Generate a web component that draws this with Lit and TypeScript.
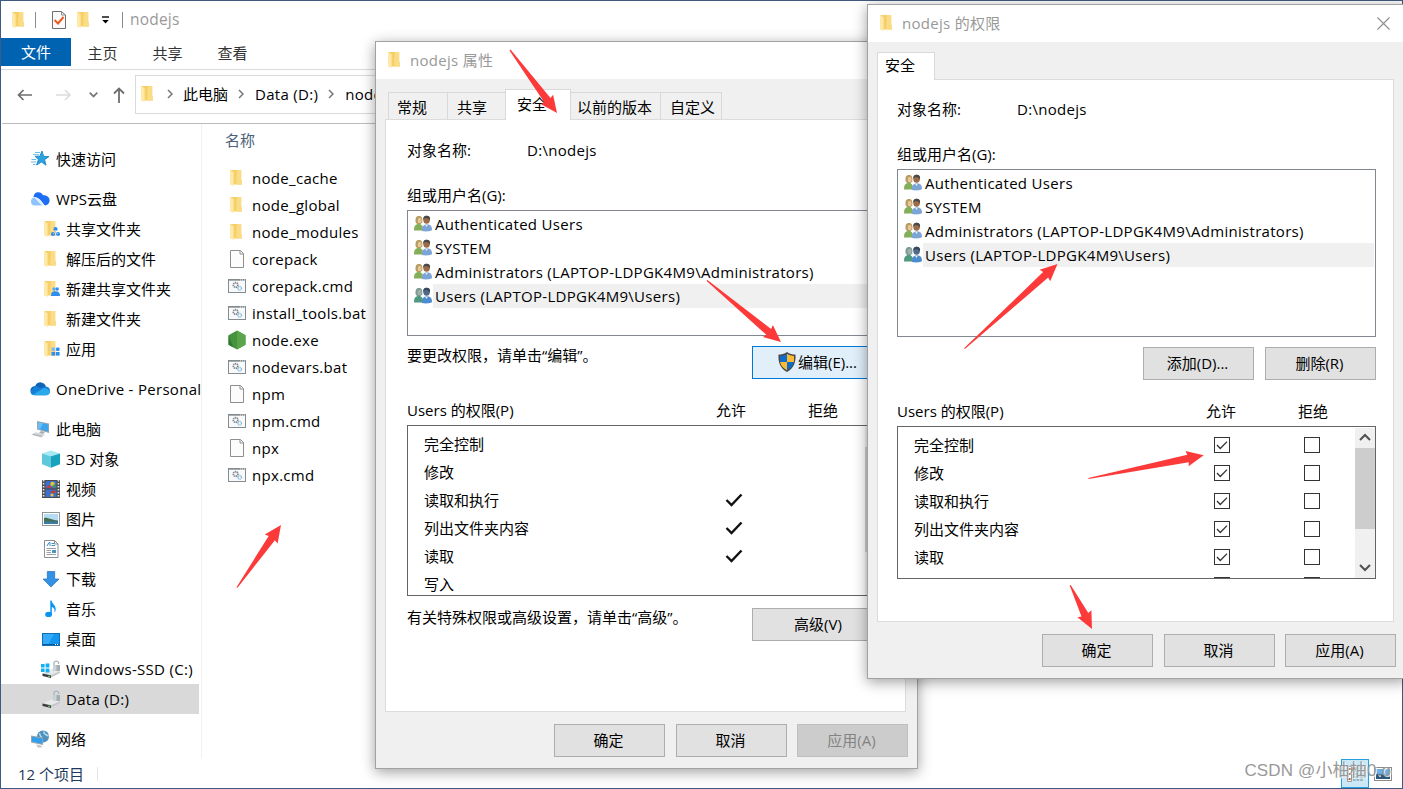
import { LitElement, html, css, svg } from 'lit';
import { customElement } from 'lit/decorators.js';
import { classMap } from 'lit/directives/class-map.js';

/* ---------- Icons (18x18 unless noted) ---------- */

const icon = (body: unknown) => html`<svg class="icon" width="18" height="18" viewBox="0 0 18 18">${body}</svg>`;

const folderShape = svg`
  <path d="M2.5 1H13.2V11.5H14V15.5H2.5Z" fill="#f6cf68"/>
  <path d="M9 1H13.2V11.5H14V15.5H8Z" fill="#f9dc85"/>
  <path d="M2 1L5.6 3.2V17L2 15.2Z" fill="#ffe9a8"/>`;

const diskShape = svg`
  <path d="M1 13.5L10 9.5L18 11.5V13L9 17.5L1 15.5Z" fill="#c3c7ca"/>
  <path d="M1 13.2L10 9.2L18 11.2L9.5 15Z" fill="#e6e8ea"/>
  <path d="M0.5 13.6L9 15.4V18L0.5 16Z" fill="#3a3d3f"/>
  <path d="M6 16.3H8" stroke="#57d957"/>
  <path d="M12 5V2.8A2.4 2.4 0 0 1 16.6 2.8V4" fill="none" stroke="#a8b4bb" stroke-width="1.3"/>
  <rect x="11.5" y="5" width="6.5" height="6" fill="#a3adb3"/>
  <rect x="11.5" y="5" width="3" height="6" fill="#c9d3d8"/>`;

const people = (selected = false) => {
  const [hair, skin, green, dark, face, blue] = selected
    ? ['#7f9a94', '#9fb3ac', '#4f9a7f', '#38485c', '#4f6a86', '#4c8ccf']
    : ['#b89b5e', '#e6c79c', '#85ae5a', '#4a4745', '#9a6d48', '#7ba5d6'];
  return icon(svg`
    <path d="M1.5 7C1.2 2.5 2.5 1 5 1S8.8 2.6 8.3 7.5L6.5 9H3Z" fill="${hair}"/>
    <ellipse cx="5.6" cy="5.4" rx="2" ry="2.7" fill="${skin}"/>
    <path d="M0 15.5C0 11 1 9.4 5 8.8C8 9.4 9 11 9 15.5Z" fill="${green}"/>
    <ellipse cx="12.6" cy="4.8" rx="3.3" ry="4" fill="${face}"/>
    <path d="M9.2 5C9 1.8 10.6 0.6 13 0.8C16 1 16.6 3.4 15.8 5.6C15 3.4 13 3.4 11 3Z" fill="${dark}"/>
    <path d="M7.8 16C7.8 11.5 9 10 12.5 9C16.5 9.6 18 11 18 15.2C15 16.6 11 16.6 7.8 16Z" fill="${blue}"/>
    <path d="M11 9.4L12.4 12L14 9.4Z" fill="#e9eef5"/>`);
};

const icons: Record<string, unknown> = {
  folder: icon(folderShape),
  star: icon(svg`
    <path d="M11 1L12.6 6.3L18 6.6L13.6 9.7L15 15.2L10.5 12L5.6 15L7.4 9.6L4 6.3L8.8 6.2Z" fill="#2aa3e0" stroke="#1580bd" stroke-width=".8"/>
    <path d="M4 2.5H9M2 4.7H8M0.5 9.5H5M0 12H5M2 14.5H4.5" stroke="#66bdec"/>`),
  wps: icon(svg`
    <path d="M0 11.5A4 4 0 0 1 3.5 7.6L11 15.5H4A4 4 0 0 1 0 11.5Z" fill="#8dc4ff"/>
    <path d="M2.5 7C3 3.5 5 2.3 7.3 2.3S11 3.4 12 5.3C15.8 5 18.8 7.4 18.6 10.6C18.4 14 16 15.5 14 15.5C11 12.5 9 7 2.5 7Z" fill="#1f6df2"/>
    <path d="M3.5 7.6C8 7 10 11 13 15.5H11C9 14 8 9.5 3.5 7.6Z" fill="#d9ebff"/>`),
  folderShare: icon(svg`${folderShape}
    <circle cx="13.5" cy="9" r="2.1" fill="#2e8df0"/><circle cx="11" cy="14" r="2.1" fill="#2e8df0"/><circle cx="16" cy="14" r="2.1" fill="#2e8df0"/>
    <path d="M13.5 10V12L11 14M13.5 12L16 14" fill="none" stroke="#9fc9f7"/>`),
  folderPeople: icon(svg`${folderShape}
    <circle cx="12" cy="9" r="1.7" fill="#5ba8f5"/><circle cx="15.2" cy="9" r="1.7" fill="#2e8df0"/>
    <path d="M9 16C9 12.5 10.5 11.3 13.3 11.3S18 12.5 18 16Z" fill="#2e8df0"/>`),
  folderApps: icon(svg`${folderShape}
    <rect x="9.5" y="7.5" width="3.6" height="3.6" fill="#7cbcf7"/><rect x="14" y="7.5" width="3.6" height="3.6" rx="1" fill="#2e8df0"/>
    <rect x="9.5" y="12" width="3.6" height="3.6" fill="#2e8df0"/><rect x="14" y="12" width="3.6" height="3.6" fill="#2e8df0"/>`),
  onedrive: html`<svg class="icon" width="20" height="18" viewBox="1 2 18 14">
    <path d="M0.5 11.2C0.3 8 2.5 6.2 5 6.3C6.6 3 9 2.2 11 2.4C14 2.7 15.4 4.5 16 6.6L8 12Z" fill="#0f64b8"/>
    <path d="M5 6.3C7 6 8.5 7 10 8L16 6.6C18.5 6.8 20 8.5 20 11C19.8 14 18 15.2 16 15.2H4.5C2 15.2 0.4 13.6 0.5 11.2Z" fill="#1580d8"/>
    <path d="M3 14.8L13 8.4C14.5 7.6 17 8 20 11.5C19.6 14 18 15.2 16 15.2H4.5Z" fill="#2aa8ea"/>
  </svg>`,
  pc: icon(svg`
    <path d="M6 1L18 3.5V13L6 9.5Z" fill="#9aa5ad"/>
    <path d="M7 2.2L17.2 4.4V11.6L7 8.8Z" fill="#3aa4ef"/>
    <path d="M7 2.2L12 3.3L9 9.4L7 8.8Z" fill="#68bff7"/>
    <path d="M10 11L14 12L12 14L8 13Z" fill="#a6adb2"/>
    <path d="M0 14.4L5 12.2L14 14.8L10 17.4Z" fill="#cfd4d8"/>
    <path d="M2 14.5L11 16.4" stroke="#9aa2a8" stroke-width=".7"/>`),
  cube: icon(svg`
    <path d="M9 0.5L18 3.5L9 6.2L0 3.5Z" fill="#a6e9f3"/>
    <path d="M0 3.5L9 6.2V17.8L0 14.2Z" fill="#5fc9dc"/>
    <path d="M18 3.5L9 6.2V17.8L18 14.2Z" fill="#18a3bd"/>`),
  video: icon(svg`
    <rect width="18" height="18" fill="#4c4c4c"/>
    <path d="M1.6 0V18M16.4 0V18" stroke="#e8e8e8" stroke-width="1.6" stroke-dasharray="1.6 1.4"/>
    <rect x="3.5" y="1" width="11" height="7.3" fill="#3d6fd0"/><rect x="3.5" y="9.6" width="11" height="7.4" fill="#3d6fd0"/>
    <circle cx="10.5" cy="4" r="2.2" fill="#e8c42f"/><circle cx="12" cy="6" r="1.6" fill="#4a9b3c"/>
    <path d="M4 7.8L7 5L10 8ZM8 12L12 10L14 12L11 13.5Z" fill="#d2392e"/><circle cx="10" cy="15" r="1.6" fill="#e8c42f"/>`),
  picture: icon(svg`
    <rect x="0.5" y="2.5" width="17" height="13" fill="#fff" stroke="#8f979c"/>
    <rect x="2" y="4" width="14" height="10" fill="#b5dcf5"/>
    <path d="M2 8C5 7 8 9.5 16 10.5V12H2Z" fill="#446e50"/><path d="M2 11.5H16V14H2Z" fill="#3c7aa8"/>`),
  doc: icon(svg`
    <path d="M2.5 0.5H12.5L16 4V17.5H2.5Z" fill="#fff" stroke="#8b8f92"/>
    <path d="M12.5 0.5V4H16" fill="none" stroke="#8b8f92"/>
    <path d="M5 6L7 2.5H8V6M9.5 3.5H12M9.5 5.5H13" fill="none" stroke="#3b8ec2"/>
    <path d="M4.5 8.5H14M4.5 10.5H9M4.5 12.5H9M4.5 14.5H14" stroke="#9a9fa3"/>
    <rect x="10" y="10" width="4" height="3" fill="#4b93bd"/>`),
  download: icon(svg`<path d="M5.3 1.5H12.7V9H17L9 17L1 9H5.3Z" fill="#3492e6" stroke="#2273bd" stroke-width=".7"/>`),
  music: icon(svg`
    <path d="M8.3 0.5H9.6C10 4 14 5 13.7 9.5C13.6 11 13 12 12.4 12.5C13.2 9 11.5 7.5 9.8 7V14H8.3Z" fill="#0b93f0"/>
    <ellipse cx="6.6" cy="14.4" rx="3.4" ry="2.7" fill="#0b93f0"/>`),
  desktop: icon(svg`
    <rect x="0.5" y="3.5" width="17" height="12" fill="#1296f0" stroke="#0c6fb8"/>
    <path d="M1 4H12L6 15H1Z" fill="#35aaf8"/><path d="M1 14.5H17" stroke="#0b5a97"/><path d="M13 14.5H16" stroke="#fff" stroke-dasharray="1 1"/>`),
  driveC: icon(svg`${diskShape}
    <path d="M-1 4H2.6V7.6H-1ZM3.6 3.4H7.4V7.6H3.6ZM-1 8.6H2.6V12H-1ZM3.6 8.6H7.4V12.6H3.6Z" fill="#12b0f2"/>`),
  drive: icon(diskShape),
  network: icon(svg`
    <circle cx="12" cy="6.6" r="6" fill="#4f90bf"/><path d="M8.2 3.4C10 5 8 6 11 7.4M13 1.4C12 4 15 4.6 17.6 6" fill="none" stroke="#b4dcec" stroke-width="1.5"/>
    <path d="M0 5.5L12 7.6V15L0 12.5Z" fill="#98a4ad"/><path d="M1 6.7L11.2 8.5V13.8L1 11.6Z" fill="#2f9ff0"/>
    <path d="M5 14.5L9 15.3L12 17L7 17.8Z" fill="#c1c6ca"/>`),
  file: icon(svg`
    <path d="M2.5 0.5H12.5L15.5 3.5V17.5H2.5Z" fill="#fcfcfc" stroke="#8e8e8e"/>
    <path d="M12 0.5V4H15.5" fill="none" stroke="#8e8e8e"/>`),
  script: icon(svg`
    <rect x="0.5" y="2.5" width="17" height="13" fill="#f7f9fa" stroke="#858b8f"/>
    <path d="M0 3H18" stroke="#858b8f" stroke-width="1.4"/><path d="M12 3H17" stroke="#fff" stroke-width=".8" stroke-dasharray="1 1"/>
    <circle cx="7.6" cy="8" r="2.3" fill="none" stroke="#83898d" stroke-width="1.7" stroke-dasharray="1.3 .5"/>
    <circle cx="11.7" cy="11.3" r="1.8" fill="none" stroke="#86b9da" stroke-width="1.3" stroke-dasharray="1.1 .4"/>`),
  node: icon(svg`
    <path d="M9 -0.5L17.5 4.2V13.8L9 18.5L0.5 13.8V4.2Z" fill="#46923d"/>
    <path d="M9 -0.5L17.5 4.2V13.8L9 18.5Z" fill="#5aa54c"/><path d="M0.5 4.2L5.5 16.6L0.5 13.8Z" fill="#2f7a33"/>`),
};

const chevron = html`<svg class="chev" width="6" height="10" viewBox="0 0 6 10"><path d="M1 1L5 5L1 9" fill="none" stroke="#767676" stroke-width="1.5"/></svg>`;

/* ---------- Shared styles ---------- */

const base = css`
  :host,
  * {
    box-sizing: border-box;
  }
  :host {
    display: flex;
    flex-direction: column;
    font-family: 'Open Sans', 'Noto Sans CJK SC', sans-serif;
    font-size: 15px;
    line-height: 20px;
    color: #000;
    white-space: nowrap;
  }
  .icon {
    display: block;
    flex: none;
    overflow: visible;
  }
  .latin {
    letter-spacing: 0.3px;
  }
`;

const dialogStyles = css`
  :host {
    background: #f0f0f0;
    border: 1px solid #a2a2a2;
    box-shadow: 0 3px 13px rgba(0, 0, 0, 0.38);
  }
  .title {
    display: flex;
    align-items: center;
    flex: none;
    height: 37px;
    padding: 0 0 1px 10px;
    gap: 6px;
    background: #fff;
    color: #999;
    letter-spacing: 0.3px;
  }
  .tabs {
    display: flex;
    align-items: flex-end;
    flex: none;
    z-index: 1;
  }
  .tab {
    height: 27px;
    padding: 4px 0 0 8px;
    border: 1px solid #d9d9d9;
    border-width: 1px 0 0 1px;
  }
  .tab.active {
    height: 31px;
    padding-top: 4px;
    padding-left: 11px;
    margin-bottom: -1px;
    background: #fff;
    border-right-width: 1px;
  }
  .panel {
    display: flex;
    flex-direction: column;
    flex: none;
    border: 1px solid #dcdcdc;
    background: #fff;
    padding-top: 20px;
  }
  .object {
    display: flex;
    margin-bottom: 25px;
  }
  .object span:first-child {
    width: 120px;
  }
  .users {
    width: 479px;
    border: 1px solid #828790;
    padding: 1px 1px 0 6px;
  }
  .user {
    display: flex;
    height: 24px;
    align-items: flex-start;
    gap: 1px;
  }
  .user .icon {
    margin-top: 3px;
  }
  .user span {
    flex: 1;
    padding-left: 2px;
    line-height: 24px;
  }
  .user.selected span {
    background: #f0f0f0;
  }
  .btn {
    display: flex;
    align-items: center;
    justify-content: center;
    flex: none;
    width: 111px;
    height: 33px;
    padding: 0 2px 2px 0;
    background: #e1e1e1;
    border: 1px solid #adadad;
  }
  .btn.disabled {
    background: #ccc;
    border-color: #bfbfbf;
    color: #838383;
  }
  .row {
    display: flex;
    width: 479px;
    justify-content: space-between;
  }
  .row span {
    height: 20px;
    line-height: 18px;
  }
  .perm-head {
    display: grid;
    grid-template-columns: 1fr 92px 92px;
    width: 479px;
    padding-right: 17px;
    margin: 21px 0 5px;
  }
  .perm-head span:not(:first-child) {
    text-align: center;
  }
  .perms {
    display: flex;
    width: 479px;
    border: 1px solid #646464;
    overflow: hidden;
  }
  .perm-rows {
    flex: 1;
    padding: 4px 0 0 16px;
  }
  .perm {
    display: grid;
    grid-template-columns: 1fr 90px 90px;
    height: 28px;
    align-items: center;
    justify-items: center;
  }
  .perm span {
    justify-self: start;
  }
  .scroll {
    display: flex;
    flex-direction: column;
    align-items: center;
    width: 20px;
    margin: 1px 0 0 -2px;
    padding: 5px 0 6px;
    background: #f0f0f0;
  }
  .thumb {
    width: 20px;
    margin: 7px 0 auto;
    background: #cdcdcd;
  }
  .footer {
    display: flex;
    gap: 11px;
    padding-top: 12px;
  }
  .footer .btn:last-child {
    margin-left: -1px;
  }
`;

const userNames = [
  'Authenticated Users',
  'SYSTEM',
  'Administrators (LAPTOP-LDPGK4M9\\Administrators)',
  'Users (LAPTOP-LDPGK4M9\\Users)',
];

const permissions = ['完全控制', '修改', '读取和执行', '列出文件夹内容', '读取', '写入'];

const userList = () => html`
  <div class="users">
    ${userNames.map((name, i) => html`
      <div class=${classMap({ user: true, selected: i === 3 })}>
        ${people(i === 3)}
        <span class="latin">${name}</span>
      </div>
    `)}
  </div>
`;

const permHead = () => html`
  <div class="perm-head"><span>Users 的权限(P)</span><span>允许</span><span>拒绝</span></div>
`;

const scrollbar = () => html`
  <div class="scroll">
    <svg width="12" height="8" viewBox="0 0 12 8"><path d="M1 7L6 2L11 7" fill="none" stroke="#505050" stroke-width="2"/></svg>
    <div class="thumb"></div>
    <svg width="12" height="8" viewBox="0 0 12 8"><path d="M1 1L6 6L11 1" fill="none" stroke="#505050" stroke-width="2"/></svg>
  </div>
`;

/* ---------- Explorer ---------- */

const navGroups = [
  [{ icon: 'star', label: '快速访问' }],
  [
    { icon: 'wps', label: 'WPS云盘' },
    { icon: 'folderShare', label: '共享文件夹', child: true },
    { icon: 'folder', label: '解压后的文件', child: true },
    { icon: 'folderPeople', label: '新建共享文件夹', child: true },
    { icon: 'folder', label: '新建文件夹', child: true },
    { icon: 'folderApps', label: '应用', child: true },
  ],
  [{ icon: 'onedrive', label: 'OneDrive - Personal' }],
  [
    { icon: 'pc', label: '此电脑' },
    { icon: 'cube', label: '3D 对象', child: true },
    { icon: 'video', label: '视频', child: true },
    { icon: 'picture', label: '图片', child: true },
    { icon: 'doc', label: '文档', child: true },
    { icon: 'download', label: '下载', child: true },
    { icon: 'music', label: '音乐', child: true },
    { icon: 'desktop', label: '桌面', child: true },
    { icon: 'driveC', label: 'Windows-SSD (C:)', child: true },
    { icon: 'drive', label: 'Data (D:)', child: true, selected: true },
  ],
  [{ icon: 'network', label: '网络' }],
] as { icon: string; label: string; child?: boolean; selected?: boolean }[][];

const isLatin = (label: string) => /^[\x20-\x7e]+$/.test(label);

const files = [
  ['folder', 'node_cache'],
  ['folder', 'node_global'],
  ['folder', 'node_modules'],
  ['file', 'corepack'],
  ['script', 'corepack.cmd'],
  ['script', 'install_tools.bat'],
  ['node', 'node.exe'],
  ['script', 'nodevars.bat'],
  ['file', 'npm'],
  ['script', 'npm.cmd'],
  ['file', 'npx'],
  ['script', 'npx.cmd'],
];

@customElement('explorer-window')
export class ExplorerWindow extends LitElement {
  static styles = [base, css`
    :host {
      width: 1403px;
      height: 789px;
      background: #fff;
      border: 1px solid #3f5a80;
    }
    .title {
      display: flex;
      align-items: center;
      height: 37px;
      padding-left: 9px;
      color: #999;
    }
    .sep {
      width: 1px;
      height: 16px;
      background: #8c8c8c;
    }
    .title .sep:nth-of-type(1) {
      margin: 0 14px 0 7px;
    }
    .title .check {
      margin-right: 8px;
    }
    .title .drop {
      margin: 0 13px 0 9px;
    }
    .title span {
      margin: 0 0 1px 7px;
      font-size: 15.5px;
      letter-spacing: 0.2px;
    }
    .ribbon {
      display: flex;
      height: 32px;
      padding-bottom: 3px;
      border-bottom: 1px solid #dadbdc;
      color: #333;
    }
    .ribbon span {
      width: 65px;
      text-align: center;
      line-height: 30px;
    }
    .ribbon .file {
      width: 70px;
      margin-right: -1px;
      background: #0063b1;
      color: #fff;
      line-height: 29px;
    }
    .nav {
      display: flex;
      align-items: center;
      height: 54px;
      padding: 0 0 4px 15px;
      border-bottom: 1px solid #bcbcbc;
      margin-left: 1px;
    }
    .nav > svg:nth-of-type(2) {
      margin-left: 23px;
    }
    .nav > svg:nth-of-type(3) {
      margin-left: 17px;
    }
    .nav > svg:nth-of-type(4) {
      margin-left: 15px;
    }
    .address {
      display: flex;
      align-items: center;
      flex: 1;
      height: 39px;
      margin-left: 10px;
      padding: 0 0 1px 3px;
      border: 1px solid #d9d9d9;
    }
    .address .chev {
      margin: 0 10px;
    }
    .address .latin {
      margin-left: 1px;
    }
    .body {
      display: flex;
      flex: 1;
      min-height: 0;
    }
    .tree {
      display: flex;
      flex-direction: column;
      gap: 10px;
      width: 201px;
      height: 634px;
      padding-top: 20px;
      border-right: 1px solid #f0f0f0;
    }
    .item {
      display: flex;
      align-items: center;
      height: 30px;
      width: 198px;
      padding-left: 30px;
    }
    .item .icon {
      width: 18px;
      margin-right: 7px;
    }
    .item.child {
      padding-left: 41px;
    }
    .item.child .icon {
      margin-right: 6px;
    }
    .item.selected {
      background: #d9d9d9;
    }
    .files {
      padding: 6px 0 0 23px;
    }
    .files .head {
      color: #4c607a;
      margin-bottom: 14px;
    }
    .files .item {
      height: 27px;
      padding-left: 3px;
    }
    .files .item .icon {
      margin: 0 6px 0 0;
    }
    .status {
      display: flex;
      align-items: center;
      height: 29px;
      padding-left: 17px;
      color: #1e395b;
    }
    .status .divider {
      width: 1px;
      height: 14px;
      margin-left: 13px;
      background: #e6e6e6;
    }
    .views {
      display: flex;
      align-items: center;
      gap: 5px;
      margin: 0 10px 0 auto;
    }
    .view-details {
      display: flex;
      align-items: center;
      justify-content: center;
      width: 28px;
      height: 29px;
      background: #cbe8f6;
      border: 1px solid #26a0da;
    }
  `];

  render() {
    return html`
      <div class="title">
        ${icons.folder}
        <div class="sep"></div>
        <svg class="check" width="17" height="18" viewBox="0 0 17 18">
          <path d="M2.5 0.5H11.5L15.5 4V17.5H2.5Z" fill="#fafafa" stroke="#6f6f6f"/>
          <path d="M11.5 0.5V4H15.5" fill="none" stroke="#8a8a8a"/>
          <path d="M4.5 9L8 12.5L13.5 6" fill="none" stroke="#f0591e" stroke-width="2"/>
        </svg>
        ${icons.folder}
        <svg class="drop" width="7" height="8" viewBox="0 0 7 8"><path d="M0 1H7" stroke="#000" stroke-width="1.4"/><path d="M0.3 4H6.7L3.5 7.4Z"/></svg>
        <div class="sep"></div>
        <span>nodejs</span>
      </div>
      <div class="ribbon">
        <span class="file">文件</span><span>主页</span><span>共享</span><span>查看</span>
      </div>
      <div class="nav">
        <svg width="16" height="12" viewBox="0 0 16 12"><path d="M15 6H1.5M6.5 1L1.5 6L6.5 11" fill="none" stroke="#6e6e6e" stroke-width="1.7"/></svg>
        <svg width="16" height="12" viewBox="0 0 16 12"><path d="M0 6H14M9 1L14 6L9 11" fill="none" stroke="#dcdcdc" stroke-width="1.6"/></svg>
        <svg width="9" height="6" viewBox="0 0 9 6"><path d="M0.7 0.7L4.5 4.5L8.3 0.7" fill="none" stroke="#7a7a7a" stroke-width="1.8"/></svg>
        <svg width="12" height="16" viewBox="0 0 12 16"><path d="M6 16V1.5M1 6.5L6 1.5L11 6.5" fill="none" stroke="#6e6e6e" stroke-width="1.8"/></svg>
        <div class="address">
          ${icons.folder}${chevron}此电脑${chevron}<span class="latin">Data (D:)</span>${chevron}<span class="latin">nodejs</span>
        </div>
      </div>
      <div class="body">
        <div class="tree">
          ${navGroups.map((group) => html`
            <div>
              ${group.map((item) => html`
                <div class=${classMap({ item: true, latin: isLatin(item.label), child: !!item.child, selected: !!item.selected })}>
                  ${icons[item.icon]}${item.label}
                </div>
              `)}
            </div>
          `)}
        </div>
        <div class="files">
          <div class="head">名称</div>
          ${files.map(([type, name]) => html`<div class="item latin">${icons[type]}${name}</div>`)}
        </div>
      </div>
      <div class="status">
        12 个项目
        <div class="divider"></div>
        <div class="views">
          <div class="view-details">
            <svg width="16" height="16" viewBox="0 0 16 16">
              <path d="M0.5 0.5H4.5V15.5H0.5Z" fill="#fff" stroke="#9a9a9a"/>
              <path d="M2.5 2V4M2.5 7V9M2.5 12V14" stroke="#b3502f" stroke-width="2"/>
              <path d="M6 2H16M6 5H16M6 8H16M6 11H16M6 14H16" stroke="#6b7a86" stroke-dasharray="2.6 1"/>
            </svg>
          </div>
          <svg width="18" height="14" viewBox="0 0 18 14">
            <rect x="0.5" y="0.5" width="17" height="13" fill="#fff" stroke="#8a8a8a"/>
            <rect x="2" y="2" width="14" height="10" fill="#6aaee6"/><path d="M2 7C6 6 9 9 16 8V12H2Z" fill="#2d5678"/>
          </svg>
        </div>
      </div>
    `;
  }
}

/* ---------- Properties dialog ---------- */

@customElement('properties-dialog')
export class PropertiesDialog extends LitElement {
  static styles = [base, dialogStyles, css`
    :host {
      width: 543px;
      height: 728px;
    }
    .tabs {
      height: 40px;
      padding: 0 0 0 12px;
    }
    .tab:nth-child(1) {
      width: 59px;
    }
    .tab:nth-child(2) {
      width: 58px;
      padding-left: 9px;
    }
    .tab:nth-child(3) {
      width: 66px;
    }
    .tab:nth-child(4) {
      width: 89px;
      padding-left: 6px;
      border-left: none;
    }
    .tab:nth-child(5) {
      width: 62px;
      padding-left: 9px;
      border-right-width: 1px;
    }
    .panel {
      width: 521px;
      height: 593px;
      margin-left: 9px;
      padding-left: 21px;
    }
    .users {
      height: 126px;
      margin: 5px 0 10px;
    }
    .row .btn {
      width: 134px;
    }
    .row .btn.edit {
      background: #e1effa;
      border-color: #0078d7;
      justify-content: flex-start;
      padding-left: 25px;
      gap: 2px;
    }
    .perms {
      height: 171px;
      margin-bottom: 12px;
    }
    .perm svg {
      margin-left: 3px;
    }
    .thumb {
      height: 105px;
    }
    .footer {
      padding-left: 178px;
    }
  `];

  render() {
    return html`
      <div class="title">${icons.folder}<span>nodejs 属性</span></div>
      <div class="tabs">
        <div class="tab">常规</div>
        <div class="tab">共享</div>
        <div class="tab active">安全</div>
        <div class="tab">以前的版本</div>
        <div class="tab">自定义</div>
      </div>
      <div class="panel">
        <div class="object"><span>对象名称:</span><span class="latin">D:\\nodejs</span></div>
        <div>组或用户名(G):</div>
        ${userList()}
        <div class="row">
          <span>要更改权限，请单击“编辑”。</span>
          <div class="btn edit">
            <svg width="18" height="20" viewBox="0 0 18 20">
              <path d="M9 0C6.5 2 3.5 2.6 0.5 2.6C0 10 2 16.5 9 20C16 16.5 18 10 17.5 2.6C14.5 2.6 11.5 2 9 0Z" fill="#4a4a4a"/>
              <path d="M9 1.8C7 3.2 4.6 3.9 2 4V10H9Z" fill="#0f6cc7"/><path d="M9 1.8C11 3.2 13.4 3.9 16 4V10H9Z" fill="#fdbb35"/>
              <path d="M2.1 10H9V18.3C5 16.2 2.8 13.6 2.1 10Z" fill="#fdbb35"/><path d="M15.9 10H9V18.3C13 16.2 15.2 13.6 15.9 10Z" fill="#0f6cc7"/>
            </svg>
            编辑(E)...
          </div>
        </div>
        ${permHead()}
        <div class="perms">
          <div class="perm-rows">
            ${permissions.map((name, i) => html`
              <div class="perm">
                <span>${name}</span>
                ${i >= 2 && i <= 4
                  ? html`<svg width="18" height="14" viewBox="0 0 18 14"><path d="M1.5 7L6.5 12L16.5 1.5" fill="none" stroke="#111" stroke-width="2.4"/></svg>`
                  : ''}
              </div>
            `)}
          </div>
          ${scrollbar()}
        </div>
        <div class="row">
          <span>有关特殊权限或高级设置，请单击“高级”。</span>
          <div class="btn">高级(V)</div>
        </div>
      </div>
      <div class="footer">
        <div class="btn">确定</div>
        <div class="btn">取消</div>
        <div class="btn disabled">应用(A)</div>
      </div>
    `;
  }
}

/* ---------- Permissions dialog ---------- */

@customElement('permissions-dialog')
export class PermissionsDialog extends LitElement {
  static styles = [base, dialogStyles, css`
    :host {
      width: 540px;
      height: 675px;
    }
    .title .close {
      margin-left: auto;
      margin-right: 16px;
    }
    .tabs {
      height: 37px;
      padding-left: 9px;
    }
    .tab.active {
      width: 58px;
      height: 28px;
      padding: 2px 0 0 7px;
    }
    .panel {
      width: 517px;
      height: 543px;
      margin-left: 9px;
      padding: 19px 0 0 19px;
    }
    .users {
      height: 168px;
      margin: 5px 0 10px;
    }
    .buttons {
      display: flex;
      gap: 11px;
      justify-content: flex-end;
      width: 479px;
    }
    .perms {
      height: 153px;
    }
    .box {
      display: block;
      grid-row: 1;
      grid-column: 2;
    }
    .box + .box {
      grid-column: 3;
    }
    .thumb {
      height: 81px;
    }
    .footer {
      padding-left: 174px;
    }
  `];

  checkbox(checked: boolean) {
    return html`
      <svg class="box" width="16" height="16" viewBox="0 0 16 16">
        <rect x="0.5" y="0.5" width="15" height="15" fill="#fff" stroke="#333"/>
        ${checked ? svg`<path d="M3 8L6.3 11.5L13 4.6" fill="none" stroke="#333" stroke-width="1.3"/>` : ''}
      </svg>
    `;
  }

  render() {
    // the sixth row is scrolled almost out of view, only its boxes peek in
    return html`
      <div class="title">
        ${icons.folder}<span>nodejs 的权限</span>
        <svg class="close" width="13" height="13" viewBox="0 0 13 13"><path d="M0.5 0.5L12.5 12.5M12.5 0.5L0.5 12.5" stroke="#8d8d8d" stroke-width="1.1"/></svg>
      </div>
      <div class="tabs"><div class="tab active">安全</div></div>
      <div class="panel">
        <div class="object"><span>对象名称:</span><span class="latin">D:\\nodejs</span></div>
        <div>组或用户名(G):</div>
        ${userList()}
        <div class="buttons">
          <div class="btn">添加(D)...</div>
          <div class="btn">删除(R)</div>
        </div>
        ${permHead()}
        <div class="perms">
          <div class="perm-rows">
            ${permissions.map((name, i) => html`
              <div class="perm">${i < 5 ? html`<span>${name}</span>` : ''}${this.checkbox(true)}${this.checkbox(false)}</div>
            `)}
          </div>
          ${scrollbar()}
        </div>
      </div>
      <div class="footer">
        <div class="btn">确定</div>
        <div class="btn">取消</div>
        <div class="btn">应用(A)</div>
      </div>
    `;
  }
}

/* ---------- Desktop ---------- */

// tail x/y, tip x/y
const arrows = [
  [510, 50, 557, 113],
  [707, 280.5, 781, 342],
  [964.5, 348.7, 1057.5, 264],
  [1088.5, 478.5, 1203.7, 455.3],
  [1070.2, 585.3, 1092, 629],
  [237, 587.5, 281, 525],
];

function arrowPoints([x1, y1, x2, y2]: number[]) {
  const len = Math.hypot(x2 - x1, y2 - y1);
  const dx = (x2 - x1) / len;
  const dy = (y2 - y1) / len;
  const at = (back: number, side: number) =>
    `${(x2 - dx * back - dy * side).toFixed(1)},${(y2 - dy * back + dx * side).toFixed(1)}`;
  return [at(0, 0), at(17, 7.8), at(16, 3.8), at(len, 0.6), at(len, -0.6), at(16, -3.8), at(17, -7.8)].join(' ');
}

@customElement('app-root')
export class AppRoot extends LitElement {
  static styles = css`
    :host {
      display: block;
      position: relative;
      width: 1403px;
      height: 789px;
      overflow: hidden;
    }
    properties-dialog,
    permissions-dialog {
      position: absolute;
      isolation: isolate;
      left: 375px;
      top: 41px;
    }
    permissions-dialog {
      left: 867px;
      top: 4px;
    }
    .arrows {
      position: absolute;
      left: 0;
      top: 0;
    }
    .watermark {
      position: absolute;
      right: 12px;
      bottom: 6px;
      font: 17px/24px 'Liberation Sans', 'Noto Sans CJK SC', sans-serif;
      letter-spacing: 0.15px;
      color: #999;
      text-shadow: 1px 1px 0 rgba(255, 255, 255, 0.8);
      white-space: nowrap;
    }
  `;

  render() {
    return html`
      <explorer-window></explorer-window>
      <properties-dialog></properties-dialog>
      <permissions-dialog></permissions-dialog>
      <svg class="arrows" width="1403" height="789">
        ${arrows.map((a) => svg`<polygon points=${arrowPoints(a)} fill="#fd3a3a"/>`)}
      </svg>
      <div class="watermark">CSDN @小柚柚0.o</div>
    `;
  }
}
